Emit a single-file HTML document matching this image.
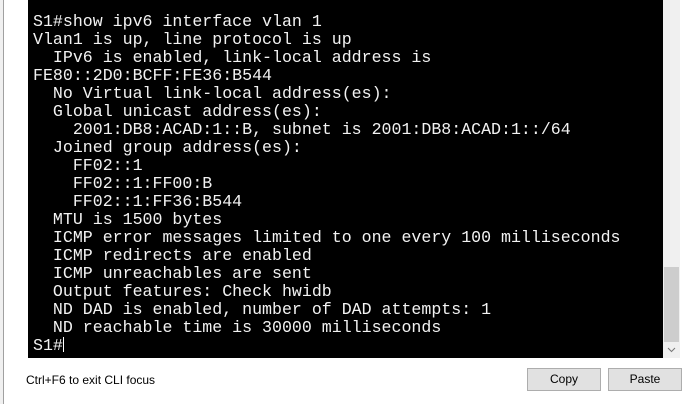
<!DOCTYPE html>
<html><head><style>
body{margin:0;width:693px;height:404px;background:#fff;position:relative;overflow:hidden;font-family:"Liberation Sans",Arial,sans-serif}
.ls{position:absolute;left:0;top:0;width:3px;height:404px;background:#f0f0f0;border-right:1px solid #a0a0a0}
.term{position:absolute;left:28px;top:0;width:635px;height:358px;background:#000}
pre{margin:0;position:absolute;left:5px;top:13px;font-family:"Courier New","Nimbus Mono PS","FreeMono","Liberation Mono",monospace;font-size:16.6px;line-height:18px;color:#f2f2f2}
.sb{position:absolute;left:663px;top:0;width:17px;height:358px;background:#f0f0f0}
.th{position:absolute;left:664px;top:267px;width:15px;height:75px;background:#cdcdcd}
.lbl{position:absolute;left:26px;top:373px;font-size:12px;color:#000}
.btn{position:absolute;top:368px;height:21px;background:#e1e1e1;border:1px solid #adadad;font-size:12px;text-align:center;line-height:21px;color:#000}
.cur{display:inline-block;width:1px;height:15px;background:#fff;vertical-align:-2px}
</style></head><body>
<div class="ls"></div>
<div class="term"><pre>S1#show ipv6 interface vlan 1
Vlan1 is up, line protocol is up
  IPv6 is enabled, link-local address is
FE80::2D0:BCFF:FE36:B544
  No Virtual link-local address(es):
  Global unicast address(es):
    2001:DB8:ACAD:1::B, subnet is 2001:DB8:ACAD:1::/64
  Joined group address(es):
    FF02::1
    FF02::1:FF00:B
    FF02::1:FF36:B544
  MTU is 1500 bytes
  ICMP error messages limited to one every 100 milliseconds
  ICMP redirects are enabled
  ICMP unreachables are sent
  Output features: Check hwidb
  ND DAD is enabled, number of DAD attempts: 1
  ND reachable time is 30000 milliseconds
S1#<span class="cur"></span></pre></div>
<div class="sb"></div><div class="th"></div>
<svg style="position:absolute;left:667px;top:347px" width="9" height="6"><path d="M1 1L4.5 4.5L8 1" stroke="#777" fill="none"/></svg>
<div class="lbl">Ctrl+F6 to exit CLI focus</div>
<div class="btn" style="left:527px;width:72px">Copy</div>
<div class="btn" style="left:608px;width:72px">Paste</div>
</body></html>
